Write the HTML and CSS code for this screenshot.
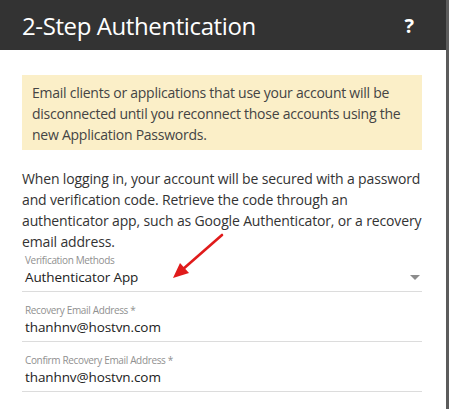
FILE: index.html
```html
<!DOCTYPE html>
<html>
<head>
<meta charset="utf-8">
<link rel="stylesheet" href="styles.css">
</head>
<body>
<div class="dialog">
  <div class="header">
    <h1 class="title">2-Step Authentication</h1>
    <span class="help">?</span>
  </div>
  <div class="body">
    <div class="notice">Email clients or applications that use your account will be disconnected until you reconnect those accounts using the new Application Passwords.</div>
    <p class="intro">When logging in, your account will be secured with a password and verification code. Retrieve the code through an authenticator app, such as Google Authenticator, or a recovery email address.</p>
    <div class="field">
      <div class="label">Verification Methods</div>
      <div class="value select">Authenticator App<span class="caret"></span></div>
    </div>
    <div class="field">
      <div class="label">Recovery Email Address *</div>
      <div class="value">thanhnv@hostvn.com</div>
    </div>
    <div class="field">
      <div class="label">Confirm Recovery Email Address *</div>
      <div class="value">thanhnv@hostvn.com</div>
    </div>
  </div>
  <svg class="arrow" width="60" height="52" viewBox="0 0 60 52">
    <line x1="52" y1="3" x2="12" y2="38" stroke="#e01b1b" stroke-width="2.6" stroke-linecap="round"/>
    <polygon points="3,46 10,31 19,41" fill="#e01b1b"/>
  </svg>
</div>
</body>
</html>
```

FILE: styles.css
```css
* { box-sizing: border-box; }
html, body { margin: 0; padding: 0; background: #fff; }
body { font-family: "Open Sans", "Noto Sans", sans-serif; color: #333; }
.dialog {
  position: relative;
  width: 449px;
  height: 409px;
  border-right: 3px solid #5c5c5c;
  overflow: hidden;
}
.header {
  height: 50px;
  background: #333333;
  display: flex;
  align-items: center;
  justify-content: space-between;
  padding: 0 32px 0 22px;
}
.title {
  margin: 0;
  font-weight: 400;
  font-size: 24px;
  color: #fff;
  letter-spacing: -0.4px;
}
.help {
  color: #fff;
  font-weight: 700;
  font-size: 20px;
}
.body { padding: 25px 24px 0 22px; }
.notice {
  background: #fbefc8;
  color: #444;
  font-size: 14px;
  line-height: 21px;
  padding: 7px 10px 5px 10px;
  letter-spacing: -0.25px;
}
.intro {
  margin: 18px 0 0;
  font-size: 14px;
  line-height: 21px;
  color: #333;
  letter-spacing: -0.15px;
}
.field {
  border-bottom: 1px solid #dcdcdc;
  padding: 0 0 4px 3px;
}
.field + .field { margin-top: 11px; }
.intro + .field { margin-top: 1px; }
.label {
  font-size: 10px;
  color: #909090;
  line-height: 14px;
  letter-spacing: -0.35px;
}
.value {
  font-size: 13.5px;
  line-height: 20px;
  color: #222;
  letter-spacing: -0.1px;
}
.select { display: flex; justify-content: space-between; align-items: center; }
.caret {
  width: 0; height: 0;
  border-left: 5px solid transparent;
  border-right: 5px solid transparent;
  border-top: 5px solid #8c8c8c;
  margin-right: 2px;
}
.arrow { position: absolute; left: 170px; top: 232px; }
```
